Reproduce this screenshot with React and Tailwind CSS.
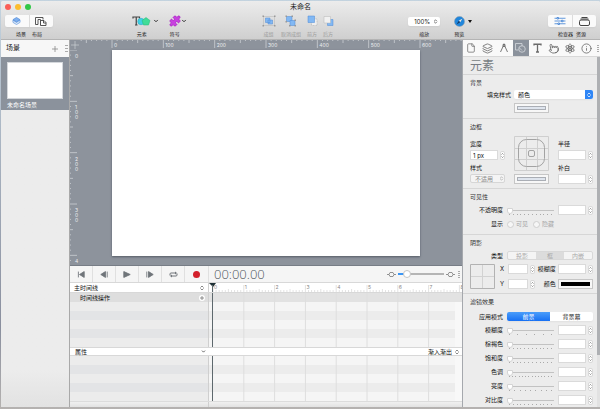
import React, { useId, useState } from 'react'
import { ChevronDown, ChevronsUpDown, File, Info, Layers, Pointer, Puzzle } from 'lucide-react'

const UNIT = 308 / 600
const SECOND = 30.8

function Toolbar() {
  return (
    <header className="bg-linear-to-b from-[#ececec] to-[#cfcfcf] border-b border-[#b4b4b4] shrink-0">
      <div className="relative flex items-center h-[11px] px-1 gap-1">
        <button aria-label="关闭" className="size-[6px] rounded-full bg-[#fb5f57]" />
        <button aria-label="最小化" className="size-[6px] rounded-full bg-[#fcbd2e]" />
        <button aria-label="缩放窗口" className="size-[6px] rounded-full bg-[#31c748]" />
        <h1 className="absolute inset-0 text-center text-[7px] leading-[11px] text-[#222] pointer-events-none">未命名</h1>
      </div>
      <div className="flex justify-between items-start pl-1 pr-1 pt-[3px] h-[27px] text-[5px] leading-[6px] text-[#222]">
        <div className="w-[52px]">
          <div className="flex w-[48px] h-[12px] rounded-[2px] bg-[#fafafa] shadow-xs">
            <button aria-label="场景" className="flex-1 flex items-center justify-center border-r border-[#dcdcdc]">
              <svg width="9" height="8" viewBox="0 0 20 18">
                <path d="M2 7v5l8 5 8-5V7l-8 5z" fill="#dbe8f8" stroke="#5b93dc" strokeWidth="1.500" />
                <path d="M10 1l8 5-8 5-8-5z" fill="#7fb0ef" stroke="#4a86d8" strokeWidth="1.500" />
              </svg>
            </button>
            <button aria-label="布局" className="flex-1 flex items-center justify-center">
              <svg width="12" height="9" viewBox="0 0 24 18" fill="#fff" stroke="#444" strokeWidth="1.8">
                <path d="M1 15V1h15v4" fill="none" />
                <path d="M1 15h5V5h5v11" fill="none" />
                <path d="M11 7h7l4 4v6H11z" />
                <path d="M17 7v5h5" fill="none" />
              </svg>
            </button>
          </div>
          <div className="flex justify-center gap-[6px] w-[48px] pt-[4px]">
            <span>场景</span>
            <span>布局</span>
          </div>
        </div>

        <div className="flex gap-[9px]">
          <button className="w-[28px] flex flex-col items-start">
            <span className="flex items-center h-[12px] gap-[2px]">
              <svg width="19" height="12" viewBox="0 0 38 24">
                <path d="M2 7V4h13v3M8.500 4v16M6 20h5" fill="none" stroke="#444" strokeWidth="2.400" />
                <circle cx="18" cy="13" r="6.500" fill="#3fd0e4" stroke="#1fa9c4" />
                <path d="M28 5l8 6-3 9H23l-3-9z" fill="#40dc98" stroke="#1fb877" />
              </svg>
              <ChevronDown className="size-[6px] text-[#333]" strokeWidth={4} />
            </span>
            <span className="w-[20px] pt-[4px]">元素</span>
          </button>
          <button className="w-[18px] flex flex-col items-start">
            <span className="flex items-center h-[12px]">
              <Puzzle className="size-[12px] text-[#b02fca]" fill="#c940e0" />
              <ChevronDown className="size-[6px] text-[#333]" strokeWidth={4} />
            </span>
            <span className="w-[12px] pt-[4px]">符号</span>
          </button>
        </div>

        <div className="flex gap-[5px] text-[#999]">
          <button disabled className="flex flex-col items-center w-[14px]">
            <svg width="14" height="12" viewBox="0 0 28 24">
              <path d="M3 3h22v18H3z" fill="none" stroke="#b5b5b5" />
              <path d="M1 1h3v3H1zM24 1h3v3h-3zM1 20h3v3H1zM24 20h3v3h-3z" fill="#999" />
              <path d="M7 6h9v9H7zM12 10h9v8h-9z" fill="#82b8f3" stroke="#4c8bd6" />
            </svg>
            <span className="pt-[4px]">成组</span>
          </button>
          <button disabled className="flex flex-col items-center w-[21px]">
            <svg width="12" height="12" viewBox="0 0 24 24">
              <path d="M3 3h11v10H3z" fill="#82b8f3" stroke="#4c8bd6" />
              <path d="M10 11h10v10H10z" fill="#82b8f3" stroke="#4c8bd6" />
              <path d="M1 1h3v3H1zM13 1h3v3h-3zM1 12h3v3H1zM19 9h3v3h-3zM8 20h3v3H8zM19 20h3v3h-3z" fill="#999" />
            </svg>
            <span className="pt-[4px] whitespace-nowrap">取消成组</span>
          </button>
          <button disabled className="flex flex-col items-center w-[11px]">
            <svg width="11" height="12" viewBox="0 0 22 24">
              <path d="M9 8h11v13H9z" fill="#eee" stroke="#aaa" strokeDasharray="2 1" />
              <path d="M2 2h13v13H2z" fill="#82b8f3" stroke="#4c8bd6" />
            </svg>
            <span className="pt-[4px]">前方</span>
          </button>
          <button disabled className="flex flex-col items-center w-[11px]">
            <svg width="11" height="12" viewBox="0 0 22 24">
              <path d="M9 9h11v12H9z" fill="#82b8f3" stroke="#4c8bd6" />
              <path d="M2 3h13v13H2z" fill="#f1f1f1" stroke="#b5b5b5" />
            </svg>
            <span className="pt-[4px]">后方</span>
          </button>
        </div>

        <div className="flex gap-[14px]">
          <div className="flex flex-col items-center w-[32px]">
            <div className="relative w-full h-[12px] flex items-center">
              <select
                id="zoom"
                className="appearance-none w-full h-[9px] rounded-[2px] bg-white pl-[6px] text-[6px] leading-[9px] shadow-xs"
              >
                <option>100%</option>
              </select>
              <ChevronsUpDown className="absolute right-[2px] size-[5px] pointer-events-none" strokeWidth={3} />
            </div>
            <label htmlFor="zoom" className="pt-[4px]">缩放</label>
          </div>
          <button className="w-[19px] flex flex-col items-start">
            <span className="flex items-center h-[12px] gap-[3px]">
              <svg width="11" height="11" viewBox="0 0 22 22">
                <circle cx="11" cy="11" r="10" fill="#1f86dc" stroke="#8a9aa8" />
                <path d="M17 5l-4.500 7.500L9.500 9.500z" fill="#efe6dc" />
                <path d="M5 17l7.500-4.500-3-3z" fill="#163a66" />
              </svg>
              <svg width="4" height="3" viewBox="0 0 8 6">
                <path d="M0 0h8L4 6z" fill="#111" />
              </svg>
            </span>
            <span className="pt-[4px]">预览</span>
          </button>
        </div>

        <div>
          <div className="flex w-[48px] h-[12px] rounded-[2px] bg-[#fafafa] shadow-xs">
            <button aria-label="检查器" className="flex-1 flex items-center justify-center border-r border-[#dcdcdc]">
              <svg width="12" height="8" viewBox="0 0 24 16" stroke="#3b7fd4" strokeWidth="1.6" fill="#fff">
                <path d="M1 2.500h22M1 8h22M1 13.500h22" />
                <path d="M6 1h3v3H6zM15 6.500h3v3h-3zM8 12h3v3H8z" />
              </svg>
            </button>
            <button aria-label="资源" className="flex-1 flex items-center justify-center">
              <svg width="11" height="9" viewBox="0 0 22 18" fill="none" stroke="#444" strokeWidth="2">
                <path d="M5 1h12M3 4h16" />
                <rect x="1" y="6" width="20" height="11" rx="3" />
              </svg>
            </button>
          </div>
          <div className="flex justify-center gap-[3px] pt-[4px]">
            <span>检查器</span>
            <span>资源</span>
          </div>
        </div>
      </div>
    </header>
  )
}

function Scenes() {
  return (
    <aside className="w-[69px] shrink-0 flex flex-col bg-linear-to-b from-[#ececec] from-90% to-[#e2e2e2] border-r border-[#a9a9a9]">
      <div className="flex items-center h-[17px] pl-[5px] pr-px bg-[#f7f7f7] text-[7px] text-[#222]">
        <h2 className="flex-1">场景</h2>
        <button aria-label="添加场景" className="mr-[7px]">
          <svg width="6" height="6" viewBox="0 0 6 6" stroke="#888">
            <path d="M3 0v6M0 3h6" strokeWidth="0.800" />
          </svg>
        </button>
        <svg width="3" height="7" viewBox="0 0 3 7" fill="none" stroke="#aaa">
          <path d="M0 .5h3M0 3.500h3M0 6.500h3" />
        </svg>
      </div>
      <button className="bg-[#8b929c] px-[6px] pt-[4px] h-[53px] text-left text-white text-[6px] leading-[9px]">
        <span className="block h-[37px] bg-white border border-[#d5d8dc] mb-px" />
        未命名场景
      </button>
    </aside>
  )
}

function HorizontalRuler() {
  const start = 42
  const ticks = Array.from({ length: 77 }, (_, i) => i - 8)
  return (
    <svg className="block w-full h-[10px]" stroke="#d5d8dc">
      {ticks.map(t => {
        const x = start + t * 10 * UNIT
        if (x < 10) return null
        const h = t % 10 === 0 ? 8 : t % 5 === 0 ? 3 : 1
        return <line key={t} x1={x} x2={x} y1="0" y2={h} strokeWidth="0.700" />
      })}
      <path d="M5 1v8M1 5h8" strokeWidth="0.600" />
      {[0, 100, 200, 300, 400, 500, 600].map(n => (
        <text key={n} x={start + n * UNIT + 2} y="7" fontSize="5" fill="#eceef0" stroke="none">{n}</text>
      ))}
    </svg>
  )
}

function VerticalRuler() {
  const ticks = Array.from({ length: 43 }, (_, i) => i)
  // the last label only has room for its first digit
  const labels = ['0', '100', '200', '300', '4']
  return (
    <svg className="block w-[12px] h-full shrink-0" stroke="#d5d8dc">
      {ticks.map(t => {
        const y = t * 10 * UNIT
        const w = t % 10 === 0 ? 7 : t % 5 === 0 ? 3 : 1
        return <line key={t} x1="0" x2={w} y1={y} y2={y} strokeWidth="0.700" />
      })}
      {labels.map((label, row) =>
        label.split('').map((d, i) => (
          <text key={label + '-' + i} x="5" y={row * 100 * UNIT + 8 + i * 5} fontSize="5" fill="#eceef0" stroke="none">{d}</text>
        ))
      )}
    </svg>
  )
}

function Stage() {
  return (
    <div className="flex-1 min-h-0 flex flex-col bg-[#8d939c] overflow-hidden">
      <HorizontalRuler />
      <div className="flex-1 min-h-0 flex">
        <VerticalRuler />
        <div className="flex-1 pl-[30px] pr-[42px] pb-[9px]">
          <div className="h-full bg-white shadow-[0_1px_2px_#555c66]" />
        </div>
      </div>
    </div>
  )
}

const transport = [
  { label: '回到开头', icon: <path d="M2 1v10M12 1v10L4 6z" /> },
  { label: '上一帧', icon: <path d="M9 1v10L1 6zM12 1v10" /> },
  { label: '播放', icon: <path d="M1 1v10l11-5z" /> },
  { label: '下一帧', icon: <path d="M1 1v10M4 1v10l8-5z" /> },
]

function TransportBar() {
  return (
    <div className="flex items-center h-[17px] bg-[#f5f5f5] border-b border-[#d8d8d8]">
      {transport.map(({ label, icon }) => (
        <button key={label} aria-label={label} className="w-[23px] h-full flex items-center justify-center border-r border-[#e0e0e0]">
          <svg width="8" height="7" viewBox="0 0 13 12" fill="#70757a" stroke="#70757a" strokeWidth="1.500">{icon}</svg>
        </button>
      ))}
      <button aria-label="循环" className="w-[23px] h-full flex items-center justify-center border-r border-[#e0e0e0]">
        <svg width="9" height="7" viewBox="0 0 18 14" fill="none" stroke="#70757a" strokeWidth="2">
          <path d="M2 9V6q0-2 2-2h9M16 5v3q0 2-2 2H5" />
          <path d="M12 1l4 3-4 3zM6 7l-4 3 4 3z" fill="#70757a" stroke="none" />
        </svg>
      </button>
      <button aria-label="录制" className="w-[24px] h-full flex items-center justify-center border-r border-[#e0e0e0]">
        <span className="size-[7px] rounded-full bg-[#d3202c]" />
      </button>
      <time className="flex-1 pl-[5px] text-[13px] leading-[16px] font-light text-[#50575d] font-['Open_Sans',sans-serif]">00:00.00</time>
      <KeyframeIcon />
      <input
        type="range"
        aria-label="时间线缩放"
        defaultValue="14"
        className="appearance-none w-[46px] h-[8px] mx-[2px] bg-[linear-gradient(90deg,#3b96f5_20%,#b5b5b5_20%)] bg-[length:100%_2px] bg-center bg-no-repeat [&::-webkit-slider-thumb]:appearance-none [&::-webkit-slider-thumb]:size-[8px] [&::-webkit-slider-thumb]:rounded-full [&::-webkit-slider-thumb]:bg-white [&::-webkit-slider-thumb]:border [&::-webkit-slider-thumb]:border-[#c4c4c4]"
      />
      <KeyframeIcon />
      <svg className="ml-[3px] mr-[2px]" width="2" height="7" viewBox="0 0 2 7" fill="#aaa">
        <path d="M0 0h2v1H0zM0 2h2v1H0zM0 4h2v1H0zM0 6h2v1H0z" />
      </svg>
    </div>
  )
}

function KeyframeIcon() {
  return (
    <svg width="9" height="5" viewBox="0 0 18 10" fill="none" stroke="#7c7c7c" strokeWidth="1.600">
      <path d="M6 1h6l2 4-2 4H6L4 5zM0 5h4M14 5h4" />
    </svg>
  )
}

function TimeRuler() {
  const ticks = Array.from({ length: 81 }, (_, i) => i)
  return (
    <svg className="block w-full h-full">
      {ticks.map(t => {
        const x = 4 + (t * SECOND) / 10
        const y = t % 10 === 0 ? 2 : t % 5 === 0 ? 6 : 7
        return <line key={t} x1={x} x2={x} y1={y} y2="9" stroke="#c4c4c4" strokeWidth="0.500" />
      })}
      {[0, 1, 2, 3, 4, 5, 6, 7, 8].map(n => (
        <text key={n} x={5 + n * SECOND} y="6" fontSize="5" fill="#888">{n}</text>
      ))}
      <path d="M0 0h7L4 4z" fill="#1f3036" />
      <path d="M3.500 2v8" stroke="#5d686d" />
    </svg>
  )
}

function Tracks({ rows, actions }) {
  return (
    <div className="flex">
      <div className="w-[139px] shrink-0 border-r border-[#cfcfcf]">
        {actions && (
          <div className="flex items-center justify-between h-[9px] pl-[10px] pr-[3px] bg-[#dedede] leading-[9px]">
            时间线操作
            <button aria-label="添加操作" className="size-[6px] rounded-full bg-white flex items-center justify-center">
              <svg width="4" height="4" viewBox="0 0 4 4" stroke="#777"><path d="M2 0v4M0 2h4" strokeWidth="0.800" /></svg>
            </button>
          </div>
        )}
        {Array.from({ length: rows }, (_, i) => (
          <div key={i} className={i % 2 ? 'h-[9px] bg-[#e3e4e6]' : 'h-[9px] bg-[#ececec]'} />
        ))}
      </div>
      <div className="relative flex-1 bg-[#f8f8f8]">
        {actions && <div className="h-[9px] bg-[#e2e2e2]" />}
        <div className="mr-[7px]">
          {Array.from({ length: rows }, (_, i) => (
            <div key={i} className={i % 2 ? 'h-[9px] bg-[#ececec]' : 'h-[9px] bg-[#f5f5f5]'} />
          ))}
        </div>
        <svg className="absolute inset-0 w-full h-full" stroke="#dedede" strokeWidth="1">
          {[1, 2, 3, 4, 5, 6, 7].map(n => (
            <line key={n} x1={4 + n * SECOND} x2={4 + n * SECOND} y1="0" y2="100%" />
          ))}
          <line x1="3.500" x2="3.500" y1="0" y2="100%" stroke="#5d686d" />
        </svg>
      </div>
    </div>
  )
}

function Timeline() {
  return (
    <section className="shrink-0 bg-[#ececec] border-t border-[#777d86] text-[6px] text-[#111]">
      <TransportBar />
      <div className="flex h-[10px] bg-white border-b border-[#d8d8d8]">
        <button className="w-[139px] flex items-center justify-between pl-[4px] pr-[3px] border-r border-[#cfcfcf]">
          主时间线
          <ChevronsUpDown className="size-[6px]" strokeWidth={2} />
        </button>
        <div className="flex-1">
          <TimeRuler />
        </div>
      </div>
      <Tracks rows={5} actions />
      <div className="flex items-center h-[9px] bg-white border-y border-[#d8d8d8]">
        <button className="w-[139px] flex items-center justify-between pl-[5px] pr-[3px]">
          属性
          <ChevronDown className="size-[5px]" strokeWidth={3} />
        </button>
        <button className="flex-1 flex items-center justify-end gap-[2px] pr-[2px]">
          渐入渐出
          <ChevronsUpDown className="size-[6px]" strokeWidth={2} />
        </button>
      </div>
      <Tracks rows={5} />
      <div className="flex h-[6px] border-t border-[#dcdcdc] bg-linear-to-b from-[#f0f0f0] to-[#e2e2e2]">
        <div className="w-[139px] border-r border-[#cfcfcf]" />
      </div>
    </section>
  )
}

function Stepper({ label }) {
  return (
    <span className="w-[5px] h-[9px] shrink-0 rounded-[2px] bg-white border border-[#d9d9d9] flex flex-col items-center justify-between py-px">
      <button aria-label={label + '增加'}>
        <svg className="block" width="3" height="2" viewBox="0 0 6 4" fill="none" stroke="#666" strokeWidth="1.500"><path d="M1 3l2-2 2 2" /></svg>
      </button>
      <button aria-label={label + '减少'}>
        <svg className="block" width="3" height="2" viewBox="0 0 6 4" fill="none" stroke="#666" strokeWidth="1.500"><path d="M1 1l2 2 2-2" /></svg>
      </button>
    </span>
  )
}

function NumberField({ id, label, value = '', className = 'w-[28px]' }) {
  return (
    <span className="flex items-center gap-[2px]">
      <input
        id={id}
        aria-label={id ? undefined : label + '数值'}
        defaultValue={value}
        className={'h-[10px] bg-white border border-[#dadada] px-[2px] text-[6px] leading-[8px] text-[#111] ' + className}
      />
      <Stepper label={label} />
    </span>
  )
}

function ColorWell({ id, label, className = 'bg-[#dfe5ee] border-[#aaaeb5]' }) {
  return (
    <button id={id} aria-label={label} className="block h-[10px] w-[35px] p-[2px] bg-[#f7f7f7] border border-[#c6c6c6]">
      <span className={'block h-full border ' + className} />
    </button>
  )
}

function Section({ title, className, children }) {
  return (
    <section className={'pl-[7px] pr-[4px] pt-[4px] border-b border-[#d6d6d6] ' + className}>
      <h3 className="text-[6px] leading-[8px] text-[#333]">{title}</h3>
      {children}
    </section>
  )
}

function SliderRow({ label, ticks }) {
  const id = useId()
  return (
    <div className="flex items-center h-[14px]">
      <label htmlFor={id} className="w-[33px] shrink-0 text-right">{label}</label>
      <div className="flex-1 mx-[4px] pt-[2px]">
        <input
          id={id}
          type="range"
          defaultValue="0"
          className="block appearance-none w-full h-[6px] bg-[linear-gradient(#c2c2c2,#c2c2c2)] bg-[length:100%_1px] bg-center bg-no-repeat [&::-webkit-slider-thumb]:appearance-none [&::-webkit-slider-thumb]:w-[6px] [&::-webkit-slider-thumb]:h-[6px] [&::-webkit-slider-thumb]:rounded-b-full [&::-webkit-slider-thumb]:rounded-t-[1px] [&::-webkit-slider-thumb]:bg-white [&::-webkit-slider-thumb]:border [&::-webkit-slider-thumb]:border-[#d4d4d4]"
        />
        <div className="flex justify-between px-[2px]">
          {Array.from({ length: ticks }, (_, i) => (
            <span key={i} className="w-px h-px bg-[#aaa]" />
          ))}
        </div>
      </div>
      <NumberField label={label} />
    </div>
  )
}

const tabs = [
  { label: '文稿', icon: <File className="size-[10px]" strokeWidth={1.8} /> },
  { label: '场景', icon: <Layers className="size-[11px]" strokeWidth={1.8} /> },
  {
    label: '度量',
    icon: (
      <svg width="8" height="10" viewBox="0 0 16 20" fill="none" stroke="currentColor" strokeWidth="1.800">
        <path d="M8 1v4M7 5L1 18M9 5l6 13" />
        <path d="M6 3h4v4H6z" />
      </svg>
    ),
  },
  {
    label: '元素',
    icon: (
      <svg width="11" height="10" viewBox="0 0 22 20" fill="none" stroke="currentColor" strokeWidth="1.600">
        <path d="M7 14H1V1h13v5" />
        <circle cx="14" cy="12" r="6.500" />
        <path d="M8 9l6 6" />
      </svg>
    ),
  },
  {
    label: '文本',
    icon: (
      <svg width="9" height="10" viewBox="0 0 18 20" fill="none" stroke="currentColor" strokeWidth="2.600">
        <path d="M2 5V2.500h14V5M9 2.500V18M6 18h6" />
      </svg>
    ),
  },
  { label: '动作', icon: <Pointer className="size-[11px] -rotate-12" strokeWidth={1.8} /> },
  {
    label: '物理特性',
    icon: (
      <svg width="10" height="11" viewBox="0 0 20 22" fill="none" stroke="currentColor" strokeWidth="1.500">
        <ellipse cx="10" cy="11" rx="3.500" ry="9.500" />
        <ellipse cx="10" cy="11" rx="3.500" ry="9.500" transform="rotate(60 10 11)" />
        <ellipse cx="10" cy="11" rx="3.500" ry="9.500" transform="rotate(120 10 11)" />
        <circle cx="10" cy="11" r="1.500" fill="currentColor" />
      </svg>
    ),
  },
  { label: '标识', icon: <Info className="size-[11px]" strokeWidth={1.8} /> },
]

function Inspector() {
  const [mode, setMode] = useState('前景')
  return (
    <aside className="w-[138px] shrink-0 flex flex-col bg-[#ececec] border-l border-[#a5a8ad] text-[6px] leading-[8px] text-[#111] overflow-hidden">
      <nav className="flex h-[17px] shrink-0 bg-[#f9f9f9] border-b border-[#d8d8d8] text-[#6b6b6b]">
        {tabs.map(({ label, icon }) => (
          <button
            key={label}
            aria-label={label}
            className={label === '元素' ? 'flex-1 flex items-center justify-center bg-[#8b929c] text-[#d5d9de]' : 'flex-1 flex items-center justify-center'}
          >
            {icon}
          </button>
        ))}
        <svg className="my-auto ml-[2px] mr-px" width="2" height="7" viewBox="0 0 2 7" fill="#aaa">
          <path d="M0 0h2v1H0zM0 2h2v1H0zM0 4h2v1H0zM0 6h2v1H0z" />
        </svg>
      </nav>
      <div className="flex flex-1 min-h-0">
        <div className="flex-1 min-w-0">
          <h2 className="h-[18px] pl-[7px] text-[12px] leading-[17px] text-[#777c82] border-b border-[#d6d6d6]">元素</h2>

          <Section title="背景" className="h-[44px]">
            <div className="flex items-center pt-[3px]">
              <label htmlFor="fill" className="w-[41px] text-right">填充样式</label>
              <div className="relative flex-1 ml-[3px] h-[9px]">
                <select id="fill" className="block appearance-none w-full h-[9px] pl-[4px] rounded-[2px] bg-white text-[6px] leading-[9px] shadow-xs">
                  <option>颜色</option>
                </select>
                <span className="absolute right-0 top-0 w-[8px] h-[9px] rounded-r-[2px] bg-[#2f86f6] text-white flex items-center justify-center pointer-events-none">
                  <ChevronsUpDown className="size-[6px]" strokeWidth={3} />
                </span>
              </div>
            </div>
            <div className="pl-[44px] pt-[4px]">
              <ColorWell label="填充颜色" />
            </div>
          </Section>

          <Section title="边框" className="h-[70px]">
            <div className="flex justify-between pt-[5px]">
              <div className="pt-[4px]">
                <label htmlFor="border-width" className="block">宽度</label>
                <div className="pt-[2px]"><NumberField id="border-width" label="宽度" value="1 px" /></div>
                <label htmlFor="border-style" className="block pt-[4px]">样式</label>
                <div className="relative pt-[2px]">
                  <select id="border-style" disabled className="block appearance-none w-[35px] h-[9px] pl-[4px] rounded-[2px] bg-[#f4f4f4] border border-[#d6d6d6] text-[6px] leading-[7px] text-[#888]">
                    <option>不适用</option>
                  </select>
                  <ChevronsUpDown className="absolute right-px bottom-[2px] size-[5px] text-[#999] pointer-events-none" strokeWidth={3} />
                </div>
              </div>
              <div>
                <svg className="block mb-[3px]" width="35" height="35" viewBox="0 0 35 35" fill="none" stroke="#cfcfcf">
                  <path d="M.5.5h34v34H.5zM12.500 0v35M23.500 0v35M0 12.500h35M0 23.500h35" />
                  <rect x="4.500" y="3.500" width="26" height="27" rx="8" stroke="#a3a3a3" />
                  <rect x="14.500" y="14.500" width="6" height="6" rx="1.500" stroke="#a3a3a3" />
                </svg>
                <ColorWell label="边框颜色" />
              </div>
              <div className="pt-[4px]">
                <label htmlFor="radius" className="block">半径</label>
                <div className="pt-[2px]"><NumberField id="radius" label="半径" /></div>
                <label htmlFor="padding" className="block pt-[4px]">补白</label>
                <div className="pt-[2px]"><NumberField id="padding" label="补白" /></div>
              </div>
            </div>
          </Section>

          <Section title="可见性" className="h-[46px]">
            <div className="pt-[2px]">
              <SliderRow label="不透明度" ticks={12} />
            </div>
            <div role="radiogroup" aria-labelledby="display-label" className="flex items-center pt-[3px] text-[#a3a3a3]">
              <span id="display-label" className="w-[33px] mr-[4px] text-right text-[#111]">显示</span>
              <label className="flex items-center gap-[2px] w-[26px]">
                <input type="radio" name="display" disabled className="appearance-none size-[7px] rounded-full bg-[#f6f6f6] border border-[#cfcfcf]" />
                可见
              </label>
              <label className="flex items-center gap-[2px]">
                <input type="radio" name="display" disabled className="appearance-none size-[7px] rounded-full bg-[#f6f6f6] border border-[#cfcfcf]" />
                隐藏
              </label>
            </div>
          </Section>

          <Section title="阴影" className="h-[59px]">
            <div className="flex items-center pt-[4px]">
              <span className="w-[33px] mr-[4px] text-right">类型</span>
              <div className="flex flex-1 h-[9px] rounded-[2px] overflow-hidden border border-[#d8d8d8] bg-[#f4f4f4] text-[6px] leading-[7px] text-[#a8a8a8]">
                <button disabled className="flex-1">投影</button>
                <button disabled className="flex-1 bg-[#dcdcdc]">框</button>
                <button disabled className="flex-1">内嵌</button>
              </div>
            </div>
            <div className="flex pt-[4px]">
              <svg className="shrink-0" width="25" height="25" viewBox="0 0 25 25" fill="none" stroke="#d2d2d2">
                <path d="M12.500 0v25M0 12.500h25" />
                <path d="M.5.5h24v24H.5z" stroke="#b2b2b2" />
              </svg>
              <div className="flex-1 flex flex-col justify-between pl-[5px]">
                <div className="flex items-center justify-between">
                  <label htmlFor="shadow-x" className="w-[6px]">X</label>
                  <NumberField id="shadow-x" label="X" className="w-[20px]" />
                  <label htmlFor="shadow-blur" className="w-[18px] text-right whitespace-nowrap">模糊度</label>
                  <NumberField id="shadow-blur" label="模糊度" />
                </div>
                <div className="flex items-center justify-between">
                  <label htmlFor="shadow-y" className="w-[6px]">Y</label>
                  <NumberField id="shadow-y" label="Y" className="w-[20px]" />
                  <label htmlFor="shadow-color" className="w-[18px] text-right">颜色</label>
                  <ColorWell id="shadow-color" label="颜色" className="bg-black border-black" />
                </div>
              </div>
            </div>
          </Section>

          <Section title="滤镜效果" className="border-b-0">
            <div className="flex items-center pt-[6px] pb-[2px]">
              <span className="w-[33px] mr-[4px] text-right whitespace-nowrap">应用模式</span>
              <div className="flex flex-1 h-[9px] rounded-[2px] overflow-hidden bg-white text-[6px] leading-[9px] shadow-xs">
                {['前景', '背景幕'].map(name => (
                  <button key={name} onClick={() => setMode(name)} className={mode === name ? 'flex-1 bg-linear-to-b from-[#4a9dfa] to-[#1670f3] text-white' : 'flex-1'}>
                    {name}
                  </button>
                ))}
              </div>
            </div>
            <SliderRow label="模糊度" ticks={6} />
            <SliderRow label="棕褐色" ticks={12} />
            <SliderRow label="饱和度" ticks={12} />
            <SliderRow label="色调" ticks={14} />
            <SliderRow label="亮度" ticks={9} />
            <SliderRow label="对比度" ticks={12} />
          </Section>
        </div>
        <div className="w-[3px] bg-[#e2e2e2]">
          <div className="h-[85%] bg-[#aeb0b3]" />
        </div>
      </div>
    </aside>
  )
}

export default function App() {
  return (
    <div className="h-screen pt-px pl-px pb-[2px] flex flex-col bg-linear-to-b from-[#c3d3df] via-[#8a8f9e] via-80% to-[#b5b2b0] font-[Inter,'Noto_Sans_CJK_SC',sans-serif]">
      <div className="flex-1 min-h-0 flex flex-col bg-[#ececec] rounded-t-[2px] overflow-hidden">
        <Toolbar />
        <div className="flex-1 min-h-0 flex">
          <Scenes />
          <main className="flex-1 min-w-0 flex flex-col">
            <Stage />
            <Timeline />
          </main>
          <Inspector />
        </div>
      </div>
    </div>
  )
}
